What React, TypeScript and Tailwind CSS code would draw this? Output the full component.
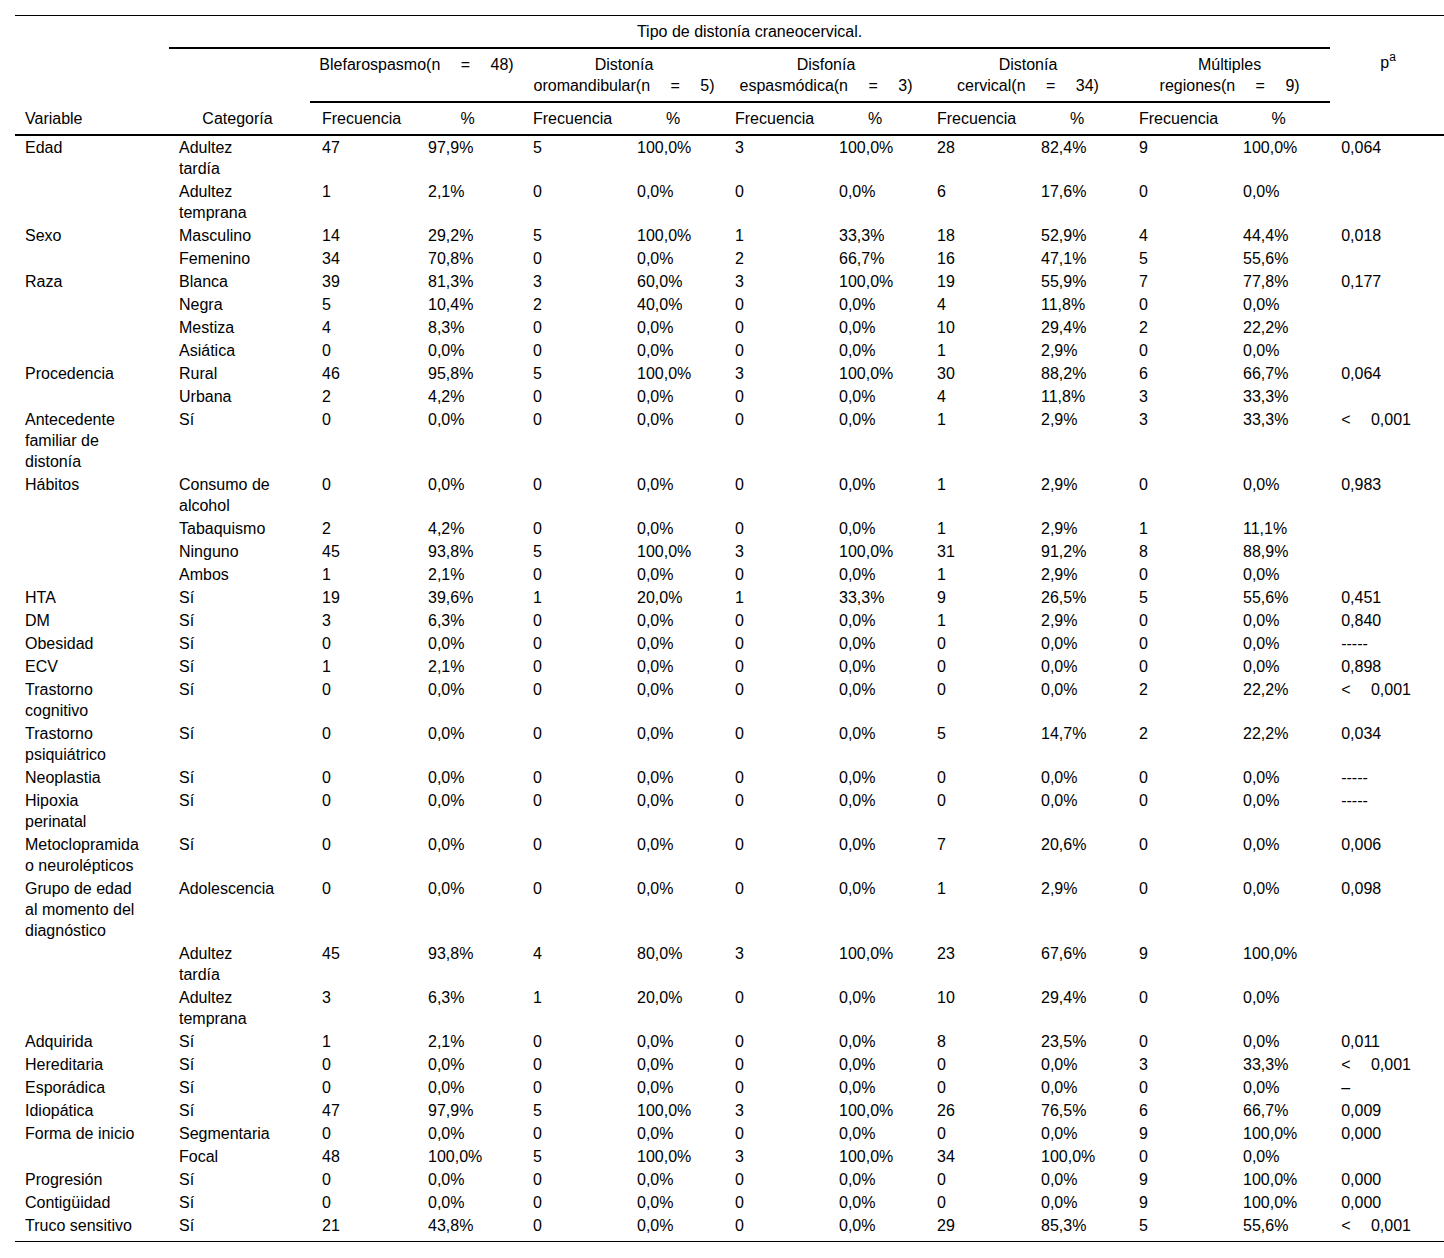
import React from "react";

const Z = ["0", "0,0%", "0", "0,0%", "0", "0,0%", "0", "0,0%", "0", "0,0%"];

const rows: string[][] = [
  ["Edad", "Adultez tardía", "47", "97,9%", "5", "100,0%", "3", "100,0%", "28", "82,4%", "9", "100,0%", "0,064"],
  ["", "Adultez temprana", "1", "2,1%", "0", "0,0%", "0", "0,0%", "6", "17,6%", "0", "0,0%", ""],
  ["Sexo", "Masculino", "14", "29,2%", "5", "100,0%", "1", "33,3%", "18", "52,9%", "4", "44,4%", "0,018"],
  ["", "Femenino", "34", "70,8%", "0", "0,0%", "2", "66,7%", "16", "47,1%", "5", "55,6%", ""],
  ["Raza", "Blanca", "39", "81,3%", "3", "60,0%", "3", "100,0%", "19", "55,9%", "7", "77,8%", "0,177"],
  ["", "Negra", "5", "10,4%", "2", "40,0%", "0", "0,0%", "4", "11,8%", "0", "0,0%", ""],
  ["", "Mestiza", "4", "8,3%", "0", "0,0%", "0", "0,0%", "10", "29,4%", "2", "22,2%", ""],
  ["", "Asiática", "0", "0,0%", "0", "0,0%", "0", "0,0%", "1", "2,9%", "0", "0,0%", ""],
  ["Procedencia", "Rural", "46", "95,8%", "5", "100,0%", "3", "100,0%", "30", "88,2%", "6", "66,7%", "0,064"],
  ["", "Urbana", "2", "4,2%", "0", "0,0%", "0", "0,0%", "4", "11,8%", "3", "33,3%", ""],
  ["Antecedente familiar de distonía", "Sí", "0", "0,0%", "0", "0,0%", "0", "0,0%", "1", "2,9%", "3", "33,3%", "LT"],
  ["Hábitos", "Consumo de alcohol", "0", "0,0%", "0", "0,0%", "0", "0,0%", "1", "2,9%", "0", "0,0%", "0,983"],
  ["", "Tabaquismo", "2", "4,2%", "0", "0,0%", "0", "0,0%", "1", "2,9%", "1", "11,1%", ""],
  ["", "Ninguno", "45", "93,8%", "5", "100,0%", "3", "100,0%", "31", "91,2%", "8", "88,9%", ""],
  ["", "Ambos", "1", "2,1%", "0", "0,0%", "0", "0,0%", "1", "2,9%", "0", "0,0%", ""],
  ["HTA", "Sí", "19", "39,6%", "1", "20,0%", "1", "33,3%", "9", "26,5%", "5", "55,6%", "0,451"],
  ["DM", "Sí", "3", "6,3%", "0", "0,0%", "0", "0,0%", "1", "2,9%", "0", "0,0%", "0,840"],
  ["Obesidad", "Sí", ...Z, "-----"],
  ["ECV", "Sí", "1", "2,1%", "0", "0,0%", "0", "0,0%", "0", "0,0%", "0", "0,0%", "0,898"],
  ["Trastorno cognitivo", "Sí", "0", "0,0%", "0", "0,0%", "0", "0,0%", "0", "0,0%", "2", "22,2%", "LT"],
  ["Trastorno psiquiátrico", "Sí", "0", "0,0%", "0", "0,0%", "0", "0,0%", "5", "14,7%", "2", "22,2%", "0,034"],
  ["Neoplastia", "Sí", ...Z, "-----"],
  ["Hipoxia perinatal", "Sí", ...Z, "-----"],
  ["Metoclopramida o neurolépticos", "Sí", "0", "0,0%", "0", "0,0%", "0", "0,0%", "7", "20,6%", "0", "0,0%", "0,006"],
  ["Grupo de edad al momento del diagnóstico", "Adolescencia", "0", "0,0%", "0", "0,0%", "0", "0,0%", "1", "2,9%", "0", "0,0%", "0,098"],
  ["", "Adultez tardía", "45", "93,8%", "4", "80,0%", "3", "100,0%", "23", "67,6%", "9", "100,0%", ""],
  ["", "Adultez temprana", "3", "6,3%", "1", "20,0%", "0", "0,0%", "10", "29,4%", "0", "0,0%", ""],
  ["Adquirida", "Sí", "1", "2,1%", "0", "0,0%", "0", "0,0%", "8", "23,5%", "0", "0,0%", "0,011"],
  ["Hereditaria", "Sí", "0", "0,0%", "0", "0,0%", "0", "0,0%", "0", "0,0%", "3", "33,3%", "LT"],
  ["Esporádica", "Sí", ...Z, "–"],
  ["Idiopática", "Sí", "47", "97,9%", "5", "100,0%", "3", "100,0%", "26", "76,5%", "6", "66,7%", "0,009"],
  ["Forma de inicio", "Segmentaria", "0", "0,0%", "0", "0,0%", "0", "0,0%", "0", "0,0%", "9", "100,0%", "0,000"],
  ["", "Focal", "48", "100,0%", "5", "100,0%", "3", "100,0%", "34", "100,0%", "0", "0,0%", ""],
  ["Progresión", "Sí", "0", "0,0%", "0", "0,0%", "0", "0,0%", "0", "0,0%", "9", "100,0%", "0,000"],
  ["Contigüidad", "Sí", "0", "0,0%", "0", "0,0%", "0", "0,0%", "0", "0,0%", "9", "100,0%", "0,000"],
  ["Truco sensitivo", "Sí", "21", "43,8%", "0", "0,0%", "0", "0,0%", "29", "85,3%", "5", "55,6%", "LT"],
];

const groups: [string, string][] = [
  ["Blefarospasmo(n\u2003 =\u2003 48)", ""],
  ["Distonía", "oromandibular(n\u2003 =\u2003 5)"],
  ["Disfonía", "espasmódica(n\u2003 =\u2003 3)"],
  ["Distonía", "cervical(n\u2003 =\u2003 34)"],
  ["Múltiples", "regiones(n\u2003 =\u2003 9)"],
];

function padFor(i: number) {
  if (i === 0) return "pl-[10px] pr-[28px]";
  if (i === 1) return "pl-[10px] pr-[34px]";
  if (i === 2) return "pl-[12px] pr-[4px]";
  if (i === 12) return "pl-[11px] pr-[4px]";
  return "pl-[10px] pr-[4px]";
}

function PVal({ v }: { v: string }) {
  if (v === "LT") return <span>{"<\u2003 0,001"}</span>;
  return <span>{v}</span>;
}

export default function App() {
  return (
    <div
      className="bg-white text-black min-h-[1258px] pt-[15px]"
      style={{ fontFamily: '"Liberation Sans", Arial, sans-serif' }}
    >
      <table className="table-fixed border-separate border-spacing-0 w-[1429px] ml-[15px] text-[16px] leading-[21px]">
        <colgroup>
          <col className="w-[154px]" />
          <col className="w-[141px]" />
          <col className="w-[108px]" />
          <col className="w-[105px]" />
          <col className="w-[104px]" />
          <col className="w-[98px]" />
          <col className="w-[104px]" />
          <col className="w-[98px]" />
          <col className="w-[104px]" />
          <col className="w-[98px]" />
          <col className="w-[104px]" />
          <col className="w-[97px]" />
          <col className="w-[114px]" />
        </colgroup>
        <thead>
          <tr>
            <th className="border-t border-black p-0"></th>
            <th
              colSpan={11}
              className="border-t border-b-2 border-black font-normal text-center py-[5px]"
            >
              Tipo de distonía craneocervical.
            </th>
            <th className="border-t border-black p-0"></th>
          </tr>
          <tr>
            <th className="p-0"></th>
            <th className="p-0"></th>
            {groups.map((g, i) => (
              <th
                key={i}
                colSpan={2}
                className="border-b-2 border-black font-normal text-center align-top py-[5px] whitespace-nowrap"
              >
                <div>{g[0]}</div>
                {g[1] ? <div>{g[1]}</div> : null}
              </th>
            ))}
            <th className="font-normal text-center align-top py-[3px] pl-[2px]">
              p<sup className="text-[12px] relative -top-[7px]">a</sup>
            </th>
          </tr>
          <tr>
            <th className="border-b-2 border-black font-normal text-left py-[5px] pl-[10px]">Variable</th>
            <th className="border-b-2 border-black font-normal text-center py-[5px] pr-[4px]">Categoría</th>
            {groups.map((_, i) => (
              <React.Fragment key={i}>
                <th className={`border-b-2 border-black font-normal text-left py-[5px] ${i === 0 ? "pl-[12px]" : "pl-[10px]"}`}>
                  Frecuencia
                </th>
                <th className="border-b-2 border-black font-normal text-center py-[5px] pr-[6px]">%</th>
              </React.Fragment>
            ))}
            <th className="border-b-2 border-black p-0"></th>
          </tr>
        </thead>
        <tbody>
          {rows.map((r, ri) => {
            const last = ri === rows.length - 1;
            return (
              <tr key={ri}>
                {r.map((c, ci) => (
                  <td
                    key={ci}
                    className={`align-top text-left ${padFor(ci)} ${last ? "pt-px pb-[5px] border-b border-black" : "py-px"}`}
                  >
                    {ci === 12 ? <PVal v={c} /> : c}
                  </td>
                ))}
              </tr>
            );
          })}
        </tbody>
      </table>
    </div>
  );
}
